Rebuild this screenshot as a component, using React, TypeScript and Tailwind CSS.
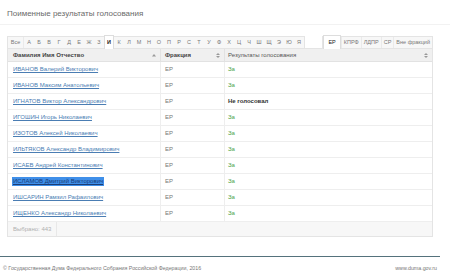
const letters = ['А','Б','В','Г','Д','Е','Ж','З','И','К','Л','М','Н','О','П','Р','С','Т','У','Ф','Х','Ц','Ч','Ш','Щ','Э','Ю','Я'];
const parties = ['ЕР', 'КПРФ', 'ЛДПР', 'СР', 'Вне фракций'];

const rows = [
  { name: 'ИВАНОВ Валерий Викторович', vote: 'За' },
  { name: 'ИВАНОВ Максим Анатольевич', vote: 'За' },
  { name: 'ИГНАТОВ Виктор Александрович', vote: 'Не голосовал' },
  { name: 'ИГОШИН Игорь Николаевич', vote: 'За' },
  { name: 'ИЗОТОВ Алексей Николаевич', vote: 'За' },
  { name: 'ИЛЬТЯКОВ Александр Владимирович', vote: 'За' },
  { name: 'ИСАЕВ Андрей Константинович', vote: 'За' },
  { name: 'ИСЛАМОВ Дмитрий Викторович', vote: 'За', selected: true },
  { name: 'ИШСАРИН Рамзил Рафаилович', vote: 'За' },
  { name: 'ИЩЕНКО Александр Николаевич', vote: 'За' },
];

function SortIcon({ up }: { up?: boolean }) {
  return (
    <svg width="4" height="5" viewBox="0 0 4 5" className="text-[#999]">
      {up ? (
        <path d="M0 3.5 L2 1 L4 3.5 Z" fill="currentColor" />
      ) : (
        <>
          <path d="M0 2 L2 0 L4 2 Z" fill="currentColor" />
          <path d="M0 3 L2 5 L4 3 Z" fill="currentColor" />
        </>
      )}
    </svg>
  );
}

export default function App() {
  return (
    <div className="w-[450px] h-[279px] bg-white overflow-hidden font-['Liberation_Sans',Arial,sans-serif] text-[#444]">
      <div className="h-[25px] border-b border-[#f2f2f2] pl-[7px] pt-[9px] text-[8px] leading-[9px] text-[#6a6a6a]">
        Поименные результаты голосования
      </div>

      <div className="pl-[7px] pr-[17px] pt-[10px]">
        {/* filter bar */}
        <div className="flex h-[13px] items-end text-[5.5px] text-[#777]">
          <div className="flex h-[12px] border border-[#e4e4e4] border-b-0 bg-[#f7f7f7]">
            <div className="w-[16px] flex items-center justify-center border-r border-[#eaeaea]">Все</div>
            {letters.map((l) => (
              <div
                key={l}
                className={
                  l === 'И'
                    ? 'w-[10px] -mt-[2px] h-[14px] flex items-center justify-center bg-white border-x border-t border-[#ddd] font-bold text-[#222]'
                    : 'w-[10px] flex items-center justify-center'
                }
              >
                {l}
              </div>
            ))}
          </div>
          <div className="flex-1" />
          <div className="flex h-[12px] border border-[#e4e4e4] border-b-0 bg-[#f7f7f7] whitespace-nowrap">
            {parties.map((p, i) => (
              <div
                key={p}
                className={
                  i === 0
                    ? 'px-[4px] -mt-[2px] h-[14px] flex items-center justify-center bg-white border-x border-t border-[#ddd] text-[#222]'
                    : 'px-[2px] flex items-center justify-center border-l border-[#eaeaea]'
                }
              >
                {p}
              </div>
            ))}
          </div>
        </div>

        {/* table */}
        <div className="border border-[#e4e4e4] text-[6px]">
          <div className="flex h-[13px] bg-[#f0f0f0] font-bold text-[#444] border-b border-[#e2e2e2]">
            <div className="w-[153px] flex items-center justify-between pl-[5px] pr-[4px] border-r border-[#e2e2e2]">
              <span>Фамилия Имя Отчество</span>
              <SortIcon up />
            </div>
            <div className="w-[64px] flex items-center justify-between pl-[4px] pr-[4px] border-r border-[#e2e2e2]">
              <span>Фракция</span>
              <SortIcon />
            </div>
            <div className="flex-1 flex items-center justify-between pl-[3px] pr-[4px] font-normal text-[#555]">
              <span>Результаты голосования</span>
              <SortIcon />
            </div>
          </div>

          {rows.map((r) => (
            <div key={r.name} className="flex h-[16px] border-b border-[#eeeeee]">
              <div className="w-[153px] flex items-center pl-[4px] border-r border-[#eeeeee]">
                <span
                  className={
                    r.selected
                      ? 'bg-[#3f8fe9] text-[#1b3d75] underline px-[1px]'
                      : 'text-[#4a7db3] underline px-[1px]'
                  }
                >
                  {r.name}
                </span>
              </div>
              <div className="w-[64px] flex items-center pl-[4px] border-r border-[#eeeeee] text-[#777]">ЕР</div>
              <div
                className={
                  r.vote === 'За'
                    ? 'flex-1 flex items-center pl-[3px] text-[#4da34d]'
                    : 'flex-1 flex items-center pl-[3px] text-[#333] font-bold'
                }
              >
                {r.vote}
              </div>
            </div>
          ))}

          <div className="h-[14px] flex items-center bg-[#f7f7f7]">
            <div className="h-full flex items-center px-[5px] border-r border-[#e8e8e8] text-[#b0b0b0]">Выбрано: 443</div>
          </div>
        </div>
      </div>

      {/* footer */}
      <div className="mt-[19px] w-[440px] h-[1px] bg-[#55727c]" />
      <div className="w-[440px] flex justify-between items-center pl-[3px] pr-[3px] pt-[8px] text-[5.3px] text-[#777]">
        <span>© Государственная Дума Федерального Собрания Российской Федерации, 2016</span>
        <span>www.duma.gov.ru</span>
      </div>
      <div className="mt-[7px] h-[1px] bg-[#e8e8e8]" />
    </div>
  );
}
